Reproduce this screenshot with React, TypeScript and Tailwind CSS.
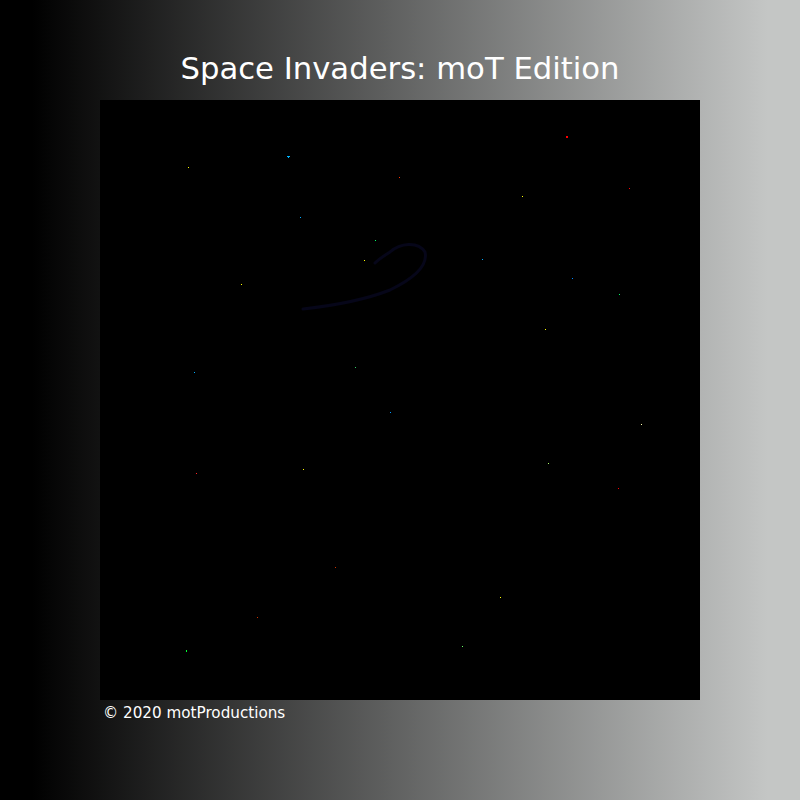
const stars = [
  { x: 187, y: 56, c: "#00b4ff", w: 3, h: 1 },
  { x: 188, y: 57, c: "#00b4ff", w: 1, h: 1 },
  { x: 88, y: 67, c: "#ffff00", w: 1, h: 1 },
  { x: 299, y: 77, c: "#ff3300", w: 1, h: 1 },
  { x: 200, y: 117, c: "#00aaff", w: 1, h: 1 },
  { x: 275, y: 140, c: "#00ff66", w: 1, h: 1 },
  { x: 264, y: 160, c: "#ffff00", w: 1, h: 1 },
  { x: 141, y: 184, c: "#ffff00", w: 1, h: 1 },
  { x: 94, y: 272, c: "#00aaff", w: 1, h: 1 },
  { x: 255, y: 267, c: "#33cc66", w: 1, h: 1 },
  { x: 466, y: 36, c: "#ff0000", w: 2, h: 2 },
  { x: 529, y: 88, c: "#ff0000", w: 1, h: 1 },
  { x: 422, y: 96, c: "#ffff00", w: 1, h: 1 },
  { x: 382, y: 159, c: "#00aaff", w: 1, h: 1 },
  { x: 472, y: 178, c: "#0088ff", w: 1, h: 1 },
  { x: 519, y: 194, c: "#00ff66", w: 1, h: 1 },
  { x: 445, y: 229, c: "#ffff00", w: 1, h: 1 },
  { x: 290, y: 312, c: "#0099ff", w: 1, h: 1 },
  { x: 96, y: 373, c: "#ff2222", w: 1, h: 1 },
  { x: 203, y: 369, c: "#ffff00", w: 1, h: 1 },
  { x: 235, y: 467, c: "#cc3300", w: 1, h: 1 },
  { x: 157, y: 517, c: "#cc3300", w: 1, h: 1 },
  { x: 86, y: 550, c: "#00ff33", w: 1, h: 2 },
  { x: 541, y: 324, c: "#ffffaa", w: 1, h: 1 },
  { x: 448, y: 363, c: "#aaff66", w: 1, h: 1 },
  { x: 518, y: 388, c: "#ff0000", w: 1, h: 1 },
  { x: 400, y: 497, c: "#ffff00", w: 1, h: 1 },
  { x: 362, y: 546, c: "#66ff66", w: 1, h: 1 },
];

export default function App() {
  return (
    <div className="w-[800px] h-[800px] flex flex-col items-center bg-[linear-gradient(to_right,#000_4%,#c4c6c5_96%)] font-['DejaVu_Sans',sans-serif] text-white">
      <h1 className="h-[100px] pt-[50px] text-[30.7px] leading-[38px]">
        Space Invaders: moT Edition
      </h1>
      <div className="relative w-[600px] h-[600px] bg-black">
        <svg width="600" height="600" className="absolute inset-0">
          <path
            d="M203 209 C 230 206, 262 201, 290 190 C 315 178, 328 165, 325 152 C 318 141, 300 143, 290 152 C 282 157, 278 160, 275 163"
            fill="none"
            stroke="#060619"
            strokeWidth="3"
            strokeLinecap="round"
          />
          {stars.map((s, i) => (
            <rect key={i} x={s.x} y={s.y} width={s.w} height={s.h} fill={s.c} />
          ))}
        </svg>
      </div>
      <p className="w-[600px] pl-[3px] pt-[4px] text-[15.2px] leading-[18px]">
        © 2020 motProductions
      </p>
    </div>
  );
}
